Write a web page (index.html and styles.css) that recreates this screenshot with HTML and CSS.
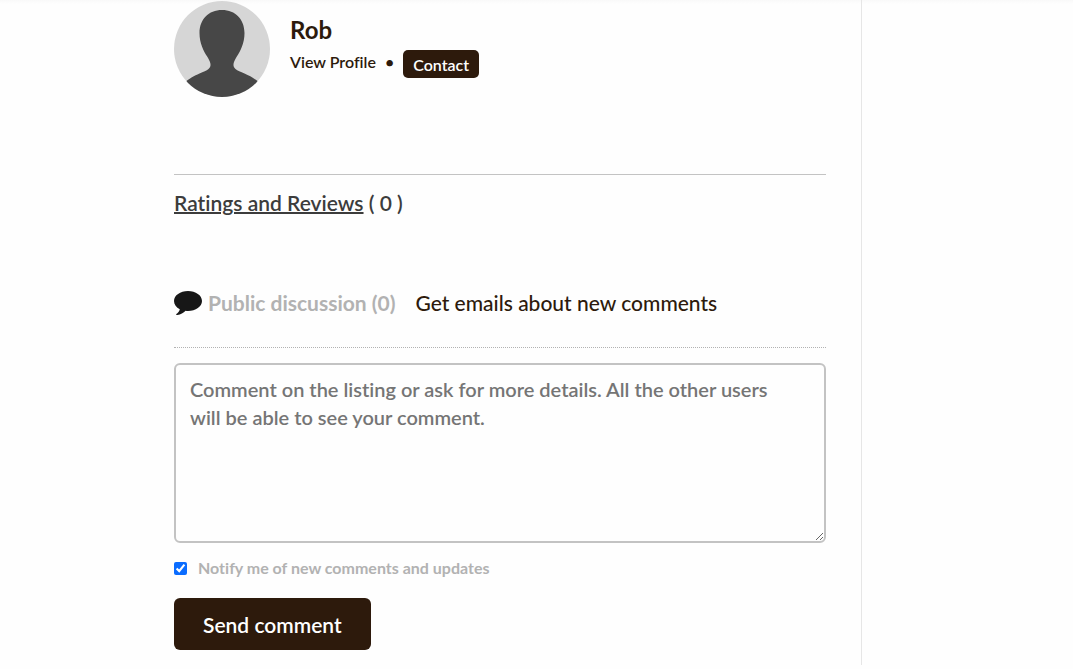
FILE: index.html
```html
<!DOCTYPE html>
<html lang="en">
	<head>
		<meta charset="utf-8">
		<meta name="viewport" content="width=device-width, initial-scale=1">
		<title>Listing</title>
		<link rel="stylesheet" href="styles.css">
	</head>
	<body>
		<div class="page">
			<main class="listing">

				<!-- author -->
				<section class="author">
					<svg class="avatar" viewBox="0 0 96 96" aria-hidden="true">
						<defs>
							<clipPath id="circle"><circle cx="48" cy="48" r="48"/></clipPath>
						</defs>
						<g clip-path="url(#circle)">
							<rect width="96" height="96" fill="#d6d6d6"/>
							<path fill="#474747" d="M48 9C34.500 9 25.500 18.500 25.500 32c0 10 4 18 8 24 3 5 4.500 9 1 12-2 1.700-5 2.700-9 4.500C20 75 16 77 10 82v14h76V82c-6-5-10-7-15.500-9.500-4-1.800-7-2.800-9-4.500-3.500-3-2-7 1-12 4-6 8-14 8-24C70.500 18.500 61.500 9 48 9z"/>
						</g>
					</svg>
					<div class="author-details">
						<h2 class="author-name">Rob</h2>
						<div class="author-links">
							<a class="profile-link" href="#">View Profile</a>
							<span class="dot">•</span>
							<button class="button button-small" type="button">Contact</button>
						</div>
					</div>
				</section>

				<!-- reviews -->
				<section class="reviews">
					<h3 class="reviews-title"><a href="#">Ratings and Reviews</a> ( 0 )</h3>
				</section>

				<!-- comments -->
				<section class="discussion">
					<div class="discussion-header">
						<svg class="bubble" viewBox="0 0 28 24" aria-hidden="true">
							<path fill="#171717" d="M14 0C6.300 0 0 4.400 0 10c0 3.500 2.300 6.400 5.800 8.200-.4 2-1.800 3.700-3.800 5 .2.600.7.900 1.400.8 3.300-.5 6-2 8.200-4.200.8.100 1.600.2 2.400.2 7.700 0 14-4.400 14-10S21.700 0 14 0z"/>
						</svg>
						<h3 class="discussion-title">Public discussion (0)</h3>
						<a class="follow-link" href="#">Get emails about new comments</a>
					</div>
					<form class="comment-form">
						<textarea class="comment-box" aria-label="Comment" placeholder="Comment on the listing or ask for more details. All the other users will be able to see your comment."></textarea>
						<div class="notify">
							<input type="checkbox" id="notify" checked>
							<label for="notify">Notify me of new comments and updates</label>
						</div>
						<button class="button button-large" type="button">Send comment</button>
					</form>
				</section>

			</main>
			<aside class="sidebar"></aside>
		</div>
	</body>
</html>
```
FILE: styles.css
```css
* {
	box-sizing: border-box;
}

body {
	margin: 0;
	background: #fefefe;
	color: #2d1a0c;
	font-family: Lato, "Liberation Sans", sans-serif;
	font-size: 20px;
	font-variant-ligatures: none;
	line-height: 28px;
}

h2, h3 {
	margin: 0;
}

a {
	color: inherit;
	text-decoration: none;
}

.page {
	display: grid;
	grid-template-columns: minmax(0, 1fr) 211px;
	/* edge of the header shadow */
	background: linear-gradient(#f9f9f9, #fefefe 4px);
}

.listing {
	padding: 1px 35px 15px 174px;
	border-right: 1px solid #e6e6e6;
}

/* author */
.author {
	display: flex;
	gap: 20px;
	padding-bottom: 77px;
	border-bottom: 1px solid #c3c3c3;
}

.avatar {
	width: 96px;
	height: 96px;
}

.author-details {
	padding-top: 13px;
}

.author-name {
	font-size: 24px;
	font-weight: 700;
	line-height: 32px;
}

.author-links {
	display: flex;
	align-items: flex-start;
	gap: 9px;
	padding-top: 4px;
	font-size: 16px;
	font-weight: 600;
}

.profile-link,
.dot {
	line-height: 24px;
}

/* buttons */
.button {
	border: 0;
	border-radius: 5px;
	background: #2d1a0c;
	color: #fff;
	font-family: inherit;
	font-weight: 600;
	cursor: pointer;
}

.button-small {
	height: 28px;
	padding: 0 10px;
	font-size: 16px;
}

.button-large {
	height: 52px;
	padding: 0 29px;
	border-radius: 6px;
	font-size: 21px;
}

/* reviews */
.reviews {
	padding: 14px 0 72px;
}

.reviews-title {
	color: #3c3c3c;
	font-size: 21px;
	font-weight: 600;
}

.reviews-title a {
	text-decoration: underline;
	text-decoration-thickness: 2px;
}

/* comments */
.discussion-header {
	display: flex;
	align-items: center;
	padding-bottom: 30px;
	border-bottom: 1px dotted #b2b2b2;
}

.bubble {
	width: 28px;
	height: 24px;
	margin-right: 6px;
}

.discussion-title {
	margin-right: 20px;
	color: #b2b2b2;
	font-size: 21px;
	font-weight: 700;
}

.follow-link {
	font-size: 21px;
	font-weight: 500;
}

.comment-form {
	padding-top: 15px;
}

.comment-box {
	display: block;
	width: 100%;
	height: 180px;
	padding: 10px 30px 10px 14px;
	border: 2px solid #c3c3c3;
	border-radius: 6px;
	background: #fefefe;
	font: inherit;
	font-weight: 600;
	resize: vertical;
}

.comment-box::placeholder {
	color: #757575;
}

.notify {
	display: flex;
	align-items: center;
	gap: 11px;
	padding: 13px 0 18px;
	color: #b2b2b2;
	font-size: 16px;
	font-weight: 700;
	line-height: 24px;
}

.notify input {
	width: 13px;
	height: 13px;
	margin: 0;
	accent-color: #0a6cff;
}
```
